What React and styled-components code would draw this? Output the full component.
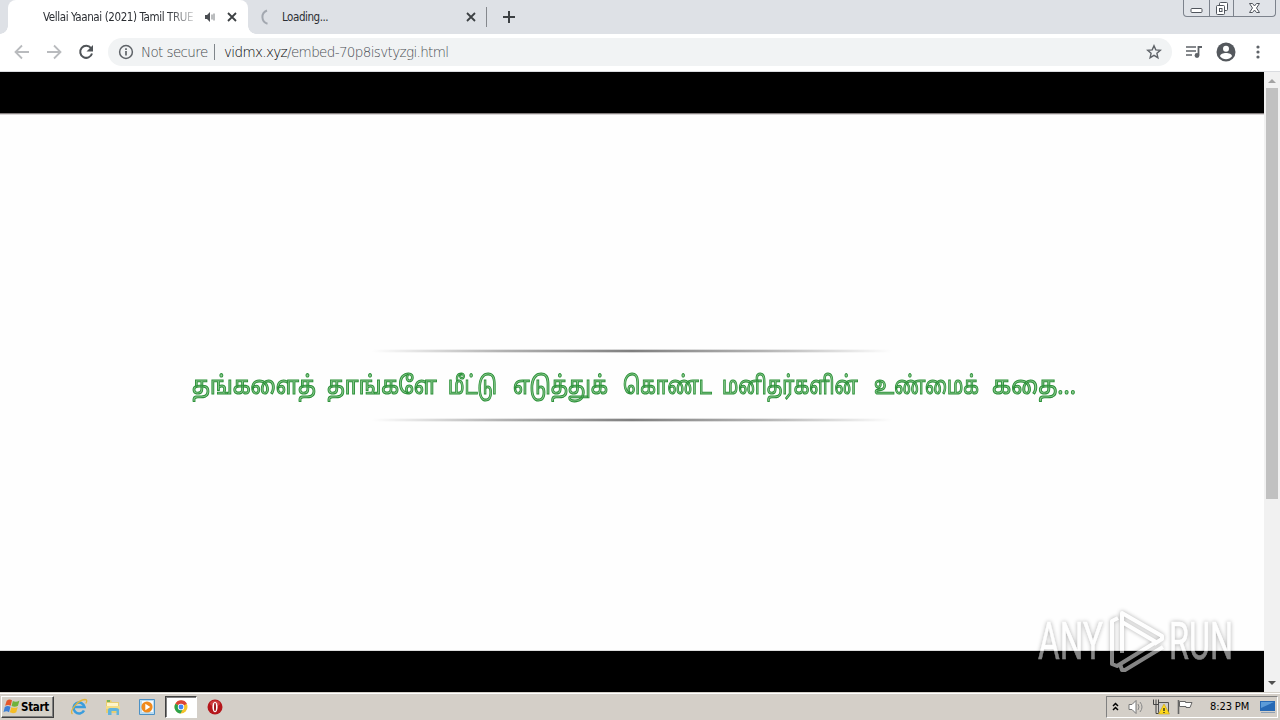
import styled, { createGlobalStyle } from "styled-components";

const GlobalStyle = createGlobalStyle`
  * {
    box-sizing: border-box;
  }
  body {
    margin: 0;
    overflow: hidden;
    font-family: "DejaVu Sans Condensed", "DejaVu Sans", sans-serif;
  }
  svg {
    display: block;
    flex: none;
  }
`;

const Desktop = styled.div`
  width: 1280px;
  height: 720px;
  display: flex;
  flex-direction: column;
  background: #fff;
`;

const TabStrip = styled.div`
  height: 34px;
  flex: none;
  display: flex;
  align-items: flex-start;
  padding-left: 8px;
  background: #dee1e6;
`;

const Tab = styled.div`
  width: ${({ $width }) => $width}px;
  height: 34px;
  display: flex;
  align-items: center;
  color: #3c4043;
  background: ${({ $active }) => ($active ? "#fff" : "transparent")};
  border-radius: 8px 8px 0 0;
  padding-left: ${({ $pad }) => $pad}px;
  position: relative;

  &::before,
  &::after {
    content: "";
    display: ${({ $active }) => ($active ? "block" : "none")};
    position: absolute;
    bottom: 0;
    width: 8px;
    height: 8px;
  }
  &::before {
    left: -8px;
    background: radial-gradient(circle at 0 0, transparent 7.5px, #fff 8px);
  }
  &::after {
    right: -8px;
    background: radial-gradient(circle at 100% 0, transparent 7.5px, #fff 8px);
  }
`;

const TabTitle = styled.span`
  width: ${({ $width }) => $width}px;
  margin-left: ${({ $left = 0 }) => $left}px;
  font-size: 11.5px;
  line-height: 16px;
  letter-spacing: ${({ $spacing }) => $spacing}px;
  white-space: nowrap;
  overflow: hidden;
  color: #2b2e33;
  mask-image: ${({ $fade }) =>
    $fade ? "linear-gradient(90deg, #000 82%, transparent 103%)" : "none"};
`;

const TabIcon = styled.span`
  margin-left: ${({ $left }) => $left}px;
`;

const TabDivider = styled.span`
  width: 1px;
  height: 20px;
  margin-top: 7px;
  background: #85888d;
`;

const NewTab = styled.div`
  margin: 11px 0 0 16px;
`;

const WindowButtons = styled.div`
  display: flex;
  height: 17px;
  width: 93px;
  margin: 0 4px 0 auto;
  border: 1px solid #7c828c;
  border-top: 0;
  border-radius: 0 0 4px 4px;
  background: #e0e3e8;
`;

const WindowButton = styled.div`
  width: ${({ $width }) => $width}px;
  display: flex;
  justify-content: center;

  & + & {
    border-left: 1px solid #7c828c;
  }
`;

const Toolbar = styled.div`
  height: 38px;
  flex: none;
  display: flex;
  align-items: center;
  padding: 0 14px 1px;
  border-bottom: 1px solid #dadce0;
`;

const NavButtons = styled.div`
  display: flex;
  gap: 16px;
`;

const AddressBar = styled.div`
  width: 1064px;
  height: 28px;
  margin-left: 14px;
  padding: 0 10px;
  display: flex;
  align-items: center;
  border-radius: 14px;
  background: #f1f3f4;
`;

const Security = styled.span`
  margin-left: 7px;
  width: 73px;
  font-size: 13.5px;
  letter-spacing: -0.62px;
  white-space: nowrap;
  font-family: "DejaVu Sans Light", "DejaVu Sans", sans-serif;
  color: #45494e;
`;

const AddressDivider = styled.span`
  width: 1px;
  height: 16px;
  background: #80868b;
`;

const Url = styled.span`
  margin-left: 9px;
  flex: 1;
  font-size: 13.5px;
  letter-spacing: -0.64px;
  white-space: nowrap;
  color: #4a4e53;
  font-family: "DejaVu Sans Light", "DejaVu Sans", sans-serif;

  b {
    font-weight: 200;
    color: #000;
  }
`;

const ToolbarIcons = styled.div`
  display: flex;
  align-items: center;
  margin-left: 13px;
`;

const ToolbarIcon = styled.span`
  margin-right: ${({ $gap }) => $gap}px;
`;

const Page = styled.div`
  height: 620px;
  flex: none;
  display: flex;
  position: relative;
`;

const Video = styled.div`
  width: 1264px;
  display: flex;
  flex-direction: column;
  background: #000;
  padding: 41px 0;
`;

const Frame = styled.div`
  height: 538px;
  border-top: 1px solid #857f7f;
  border-bottom: 1px solid #ddd;
  background: #fefefe;
  box-shadow: inset 0 1px #d9d6d6;
  padding-top: 235px;
  display: flex;
  flex-direction: column;
  align-items: center;
`;

const Rule = styled.div`
  width: 520px;
  height: 4px;
  background: linear-gradient(180deg, #fff, #777 40%, #777 60%, #fff);
  mask-image: linear-gradient(
    90deg,
    transparent,
    rgba(0, 0, 0, 0.6) 25%,
    #000 50%,
    rgba(0, 0, 0, 0.6) 75%,
    transparent
  );
`;

const Caption = styled.div`
  width: 1264px;
  height: 65px;
  padding-left: 192px;
  display: flex;
  opacity: 0.99;
`;

const Word = styled.svg`
  width: ${({ $width }) => $width}px;
  height: 65px;
  margin-right: ${({ $gap }) => $gap}px;
  overflow: visible;
  filter: blur(0.4px);

  text {
    font-family: "Noto Sans Tamil", "Lohit Tamil", "Noto Sans", sans-serif;
    font-size: 25px;
    fill: #8fcb92;
    stroke: #2c9139;
    stroke-width: 1.1px;
  }
`;

const Scrollbar = styled.div`
  width: 16px;
  display: flex;
  flex-direction: column;
  align-items: center;
  background: #f1f1f1;
`;

const ScrollArrow = styled.div`
  width: 0;
  height: 0;
  border: 4px solid transparent;
  ${({ $up }) =>
    $up
      ? "border-top: 0; border-bottom-color: #a3a3a3; margin-top: 7px;"
      : "border-bottom: 0; border-top-color: #505050; margin: auto 0 7px;"}
`;

const ScrollThumb = styled.div`
  width: 12px;
  height: 411px;
  margin-top: 5px;
  background: #c1c1c1;
`;

const Watermark = styled.svg`
  position: absolute;
  left: 1030px;
  top: 530px;
  overflow: visible;
  opacity: 0.52;
  filter: drop-shadow(0 0 2px rgba(0, 0, 0, 0.6));

  text {
    font-family: "Roboto", sans-serif;
    font-size: 51px;
    fill: #fff;
    stroke: #fff;
    stroke-width: 0.6px;
  }
`;

const Taskbar = styled.div`
  height: 28px;
  flex: none;
  display: flex;
  align-items: center;
  padding: 1px 2px 1px 1px;
  background: #d4cfc8;
  border-top: 1px solid #d4d0c8;
  box-shadow: inset 0 1px #fff;
`;

const StartButton = styled.div`
  width: 53px;
  height: 22px;
  display: flex;
  align-items: center;
  padding-left: 1px;
  font: bold 11.5px "DejaVu Sans Condensed", sans-serif;
  letter-spacing: -0.3px;
  color: #000;
  background: #d4d0c8;
  border: 1px solid;
  border-color: #fff #404040 #404040 #fff;
  box-shadow: inset -1px -1px #808080;
`;

const QuickLaunch = styled.div`
  display: flex;
  align-items: center;
  margin-left: 8px;
`;

const LaunchItem = styled.div`
  width: ${({ $pressed }) => ($pressed ? 32 : 34)}px;
  height: 22px;
  display: flex;
  align-items: center;
  justify-content: center;

  ${({ $pressed }) =>
    $pressed &&
    `
    margin: 0 1px;
    background: #fff;
    border: 1px solid;
    border-color: #404040 #fff #fff #404040;
    box-shadow: inset 1px 1px #808080;
  `}
`;

const Tray = styled.div`
  width: 172px;
  height: 22px;
  margin-left: auto;
  padding-left: 4px;
  display: flex;
  align-items: center;
  border: 1px solid;
  border-color: #808080 #fff #fff #808080;
`;

const TrayIcon = styled.span`
  margin-right: ${({ $gap }) => $gap}px;
`;

const Clock = styled.span`
  width: 50px;
  font-size: 11px;
  letter-spacing: -0.1px;
  white-space: nowrap;
  color: #000;
`;

const captionWords = [
  { text: "தங்களைத்", width: 124, gap: 11 },
  { text: "தாங்களே", width: 110, gap: 11 },
  { text: "மீட்டு", width: 49, gap: 16 },
  { text: "எடுத்துக்", width: 95, gap: 15 },
  { text: "கொண்ட", width: 89, gap: 10 },
  { text: "மனிதர்களின்", width: 136, gap: 16 },
  { text: "உண்மைக்", width: 105, gap: 13 },
  { text: "கதை...", width: 84, gap: 0 },
];

const CloseIcon = () => (
  <svg width="10" height="10" viewBox="0 0 10 10">
    <path d="M1 1l8 8M9 1L1 9" stroke="#3c4043" strokeWidth="1.8" />
  </svg>
);

const SpeakerIcon = () => (
  <svg width="12" height="10" viewBox="0 0 12 10">
    <path d="M1 3h2l3-3v10L3 7H1z" fill="#4b4e53" />
    <path d="M8 2.5v5M10 1.5v7" stroke="#777a7e" strokeWidth="1" />
  </svg>
);

const SpinnerIcon = () => (
  <svg width="16" height="16" viewBox="0 0 16 16">
    <path
      d="M10 1.500A7 7 0 0 0 10.500 14.800"
      fill="none"
      stroke="#a3a8b0"
      strokeWidth="2"
    />
  </svg>
);

const ArrowIcon = ({ flip }) => (
  <svg width="16" height="16" viewBox="0 0 16 16">
    <path
      d="M15 8H2M8 1.5L1.5 8L8 14.5"
      transform={flip ? "matrix(-1 0 0 1 16 0)" : undefined}
      fill="none"
      stroke="#b9bbbe"
      strokeWidth="1.8"
    />
  </svg>
);

const ReloadIcon = () => (
  <svg width="16" height="16" viewBox="0 0 16 16">
    <path
      d="M13 4.2A6 6 0 1 0 14 9.5"
      fill="none"
      stroke="#505458"
      strokeWidth="2"
    />
    <path d="M15 1v6.5H8.5z" fill="#505458" />
  </svg>
);

const InfoIcon = () => (
  <svg width="16" height="16" viewBox="0 0 16 16">
    <circle cx="8" cy="8" r="6.4" fill="none" stroke="#5f6368" strokeWidth="1.5" />
    <path d="M8 7v4.5M8 4.3v1.7" stroke="#5f6368" strokeWidth="1.7" />
  </svg>
);

const StarIcon = () => (
  <svg width="16" height="16" viewBox="0 0 16 16">
    <path
      d="M8 1.8l1.8 4.1 4.5.4-3.4 3 1 4.4L8 11.4l-3.9 2.3 1-4.4-3.4-3 4.5-.4z"
      fill="none"
      stroke="#5f6368"
      strokeWidth="1.4"
    />
  </svg>
);

const MediaIcon = () => (
  <svg width="18" height="14" viewBox="0 0 18 14">
    <path d="M1 2h10M1 6h10M1 10h6" stroke="#5f6368" strokeWidth="1.7" />
    <path d="M13.5 10V2H17" fill="none" stroke="#5f6368" strokeWidth="1.8" />
    <circle cx="12" cy="10.5" r="2.4" fill="#5f6368" />
  </svg>
);

const ProfileIcon = () => (
  <svg width="20" height="20" viewBox="0 0 20 20">
    <circle cx="10" cy="10" r="9.5" fill="#54585d" />
    <circle cx="10" cy="6.7" r="3" fill="#fff" />
    <path d="M4 14.2c.5-4.2 11.5-4.2 12 0-2.9 3.9-9.1 3.9-12 0z" fill="#fff" />
  </svg>
);

const MenuIcon = () => (
  <svg width="4" height="16" viewBox="0 0 4 16">
    {[3, 8, 13].map((y) => (
      <circle key={y} cx="2" cy={y} r="1.6" fill="#5f6368" />
    ))}
  </svg>
);

const FlagIcon = () => (
  <svg width="18" height="17" viewBox="0 0 16 16">
    <path d="M3 2.500c2-1.500 3.500-1.300 5-.3L6.800 7.300C5 6.200 3.400 6.300 1.500 7.400z" fill="#e4572a" />
    <path d="M8.800 2.800c2 1 4 1 6.200-.5l-1.400 5c-2 1.200-4 1.200-6 .2z" fill="#6fb23b" />
    <path d="M1.200 8.400c2-1.200 3.700-1.100 5.400-.1l-1.400 5c-1.700-1.200-3.500-1-5.200 0z" fill="#3d7fd6" />
    <path d="M7.400 8.600c2 1 4 .9 6-.2L12 13.400c-2 1.100-4 1.100-6 .1z" fill="#f5bd26" />
  </svg>
);

const ExplorerIcon = () => (
  <svg width="18" height="18" viewBox="0 0 18 18">
    <path
      d="M14 12.5A5.5 5.5 0 1 1 14.5 9H4.500"
      fill="none"
      stroke="#3a9ddd"
      strokeWidth="2.6"
    />
    <path
      d="M2.5 16C-1 13 8 2 15 1.5c2.5 0 2 2 .8 4"
      fill="none"
      stroke="#e2b53c"
      strokeWidth="1.3"
    />
  </svg>
);

const FolderIcon = () => (
  <svg width="18" height="18" viewBox="0 0 18 18">
    <path d="M2 2h5l1 2h7v11H2z" fill="#e8ce72" />
    <path d="M3 5h11v3H3z" fill="#fff5c9" />
    <path d="M3 3h3" stroke="#52a955" strokeWidth="1.5" />
    <path d="M2 8h14v3H2z" fill="#f4dd86" />
    <path d="M4 17v-5q0-2 2-2h6q3 0 3 2v5h-2.500v-4h-5v4z" fill="#61b4dd" />
  </svg>
);

const PlayerIcon = () => (
  <svg width="16" height="16" viewBox="0 0 16 16">
    <path d="M.5.5h15v15H.5z" fill="#b9dcf2" stroke="#4c91c5" />
    <path d="M3 2h11v11H3z" fill="#f8fafc" />
    <circle cx="8" cy="8" r="5.6" fill="#f08a1d" />
    <path d="M6.3 4.7L11.3 8l-5 3.3z" fill="#fff" />
  </svg>
);

const ChromeIcon = () => (
  <svg width="14" height="14" viewBox="0 0 14 14">
    <circle cx="7" cy="7" r="6.5" fill="#f5c32c" />
    <path d="M7 7L1.4 3.7a6.5 6.5 0 0 1 11.5 0z" fill="#db4437" />
    <path d="M7 7L1.4 3.7A6.5 6.5 0 0 0 6.5 13.5L9.5 8z" fill="#2ba24c" />
    <circle cx="7" cy="7" r="3.2" fill="#fff" />
    <circle cx="7" cy="7" r="2.4" fill="#4285f4" />
  </svg>
);

const OperaIcon = () => (
  <svg width="16" height="16" viewBox="0 0 16 16">
    <circle cx="8" cy="8" r="7.5" fill="#b5161b" />
    <ellipse cx="8" cy="4.5" rx="5" ry="3" fill="#d94b4b" opacity="0.7" />
    <ellipse cx="8" cy="8" rx="2.6" ry="5.3" fill="#fff" />
    <ellipse cx="8" cy="8" rx="1" ry="4.3" fill="#9e1519" />
  </svg>
);

const App = () => {
  return (
    <Desktop>
      <GlobalStyle />
      <TabStrip>
        <Tab $active $width={240} $pad={35}>
          <TabTitle $width={152} $spacing={-0.4} $fade>
            Vellai Yaanai (2021) Tamil TRUE
          </TabTitle>
          <TabIcon $left={9}>
            <SpeakerIcon />
          </TabIcon>
          <TabIcon $left={11}>
            <CloseIcon />
          </TabIcon>
        </Tab>
        <Tab $width={238} $pad={9}>
          <SpinnerIcon />
          <TabTitle $width={184} $left={9} $spacing={-0.45}>
            Loading...
          </TabTitle>
          <CloseIcon />
        </Tab>
        <TabDivider />
        <NewTab>
          <svg width="12" height="12" viewBox="0 0 12 12">
            <path d="M6 0v12M0 6h12" stroke="#3c4043" strokeWidth="2" />
          </svg>
        </NewTab>
        <WindowButtons>
          <WindowButton $width={25}>
            <svg width="13" height="14" viewBox="0 0 13 14">
              <rect x="1" y="8.5" width="11" height="4" rx="1" fill="#fff" stroke="#50555d" />
            </svg>
          </WindowButton>
          <WindowButton $width={25}>
            <svg width="14" height="16" viewBox="0 0 14 16">
              <rect x="4.5" y="2.5" width="8" height="8" rx="1" fill="#fff" stroke="#50555d" />
              <rect x="1.5" y="5.5" width="8" height="9" rx="1" fill="#fff" stroke="#50555d" />
              <rect x="4.5" y="8.5" width="2.5" height="3" fill="none" stroke="#50555d" />
            </svg>
          </WindowButton>
          <WindowButton $width={42}>
            <svg width="13" height="14" viewBox="0 0 13 14">
              <path
                d="M1.5 3.5h3l2 2.5 2-2.5h3L8.500 8l3 4.500h-3l-2-2.500-2 2.500h-3L4.500 8z"
                fill="#fff"
                stroke="#50555d"
              />
            </svg>
          </WindowButton>
        </WindowButtons>
      </TabStrip>

      <Toolbar>
        <NavButtons>
          <ArrowIcon />
          <ArrowIcon flip />
          <ReloadIcon />
        </NavButtons>
        <AddressBar>
          <InfoIcon />
          <Security>Not secure</Security>
          <AddressDivider />
          <Url>
            <b>vidmx.xyz</b>/embed-70p8isvtyzgi.html
          </Url>
          <StarIcon />
        </AddressBar>
        <ToolbarIcons>
          <ToolbarIcon $gap={13}>
            <MediaIcon />
          </ToolbarIcon>
          <ToolbarIcon $gap={20}>
            <ProfileIcon />
          </ToolbarIcon>
          <MenuIcon />
        </ToolbarIcons>
      </Toolbar>

      <Page>
        <Video>
          <Frame>
            <Rule />
            <Caption>
              {captionWords.map(({ text, width, gap }) => (
                <Word key={text} $width={width} $gap={gap}>
                  <text x="0" y="41" textLength={width} lengthAdjust="spacingAndGlyphs">
                    {text}
                  </text>
                </Word>
              ))}
            </Caption>
            <Rule />
          </Frame>
        </Video>
        <Scrollbar>
          <ScrollArrow $up />
          <ScrollThumb />
          <ScrollArrow />
        </Scrollbar>
        <Watermark width="210" height="80" viewBox="0 0 210 80">
          <text x="8" y="57" textLength="65" lengthAdjust="spacingAndGlyphs">
            ANY
          </text>
          <text x="139" y="57" textLength="64" lengthAdjust="spacingAndGlyphs">
            RUN
          </text>
          <g fill="none" stroke="#fff" strokeWidth="4" strokeLinejoin="round">
            <path d="M92 51V11l40 23v3l-8 5" />
            <path d="M88 16l-6 3v43l5 2 39-24-34-20" />
            <path d="M90 62l2 6 3 0 38-23" />
          </g>
        </Watermark>
      </Page>

      <Taskbar>
        <StartButton>
          <FlagIcon />
          Start
        </StartButton>
        <QuickLaunch>
          <LaunchItem>
            <ExplorerIcon />
          </LaunchItem>
          <LaunchItem>
            <FolderIcon />
          </LaunchItem>
          <LaunchItem>
            <PlayerIcon />
          </LaunchItem>
          <LaunchItem $pressed>
            <ChromeIcon />
          </LaunchItem>
          <LaunchItem>
            <OperaIcon />
          </LaunchItem>
        </QuickLaunch>
        <Tray>
          <TrayIcon $gap={8}>
            <svg width="9" height="12" viewBox="0 0 9 12">
              <path d="M2 5l2.5-2.5L7 5M2 9l2.5-2.5L7 9" fill="none" stroke="#000" strokeWidth="1.5" />
            </svg>
          </TrayIcon>
          <TrayIcon $gap={8}>
            <svg width="17" height="16" viewBox="0 0 17 16">
              <path d="M1 5.5h3l4-4v13l-4-4H1z" fill="#fff" stroke="#777" />
              <path d="M10 5q2 3 0 6M12 3q4 5 0 10" fill="none" stroke="#888" />
            </svg>
          </TrayIcon>
          <TrayIcon $gap={7}>
            <svg width="17" height="16" viewBox="0 0 17 16">
              <path d="M5.5 3.5h10v10h-10z" fill="#ccc" stroke="#555" />
              <path d="M.5.5v5h5v-5M3 .5v5M3 5.5v9h3" fill="none" stroke="#444" />
              <path d="M11 5l5.500 10h-11z" fill="#ffd91b" stroke="#c8a31c" strokeWidth="0.6" />
              <path d="M11 9v3M11 13v1" stroke="#222" strokeWidth="1.3" />
            </svg>
          </TrayIcon>
          <TrayIcon $gap={16}>
            <svg width="17" height="16" viewBox="0 0 17 16">
              <path d="M2.500 2.500h6v1h6.500l-2 5H9v-1H2.500z" fill="#fff" stroke="#666" />
              <path d="M1.500 1v14" stroke="#666" strokeWidth="1.6" />
            </svg>
          </TrayIcon>
          <Clock>8:23 PM</Clock>
          <svg width="16" height="14" viewBox="0 0 16 14">
            <path d="M0 1h15v10H0z" fill="#2769b5" />
            <path d="M1 2h13L1 8z" fill="#5c9bd8" />
            <path d="M1 12.500h14" stroke="#8fa0b4" />
          </svg>
        </Tray>
      </Taskbar>
    </Desktop>
  );
};

export default App;
